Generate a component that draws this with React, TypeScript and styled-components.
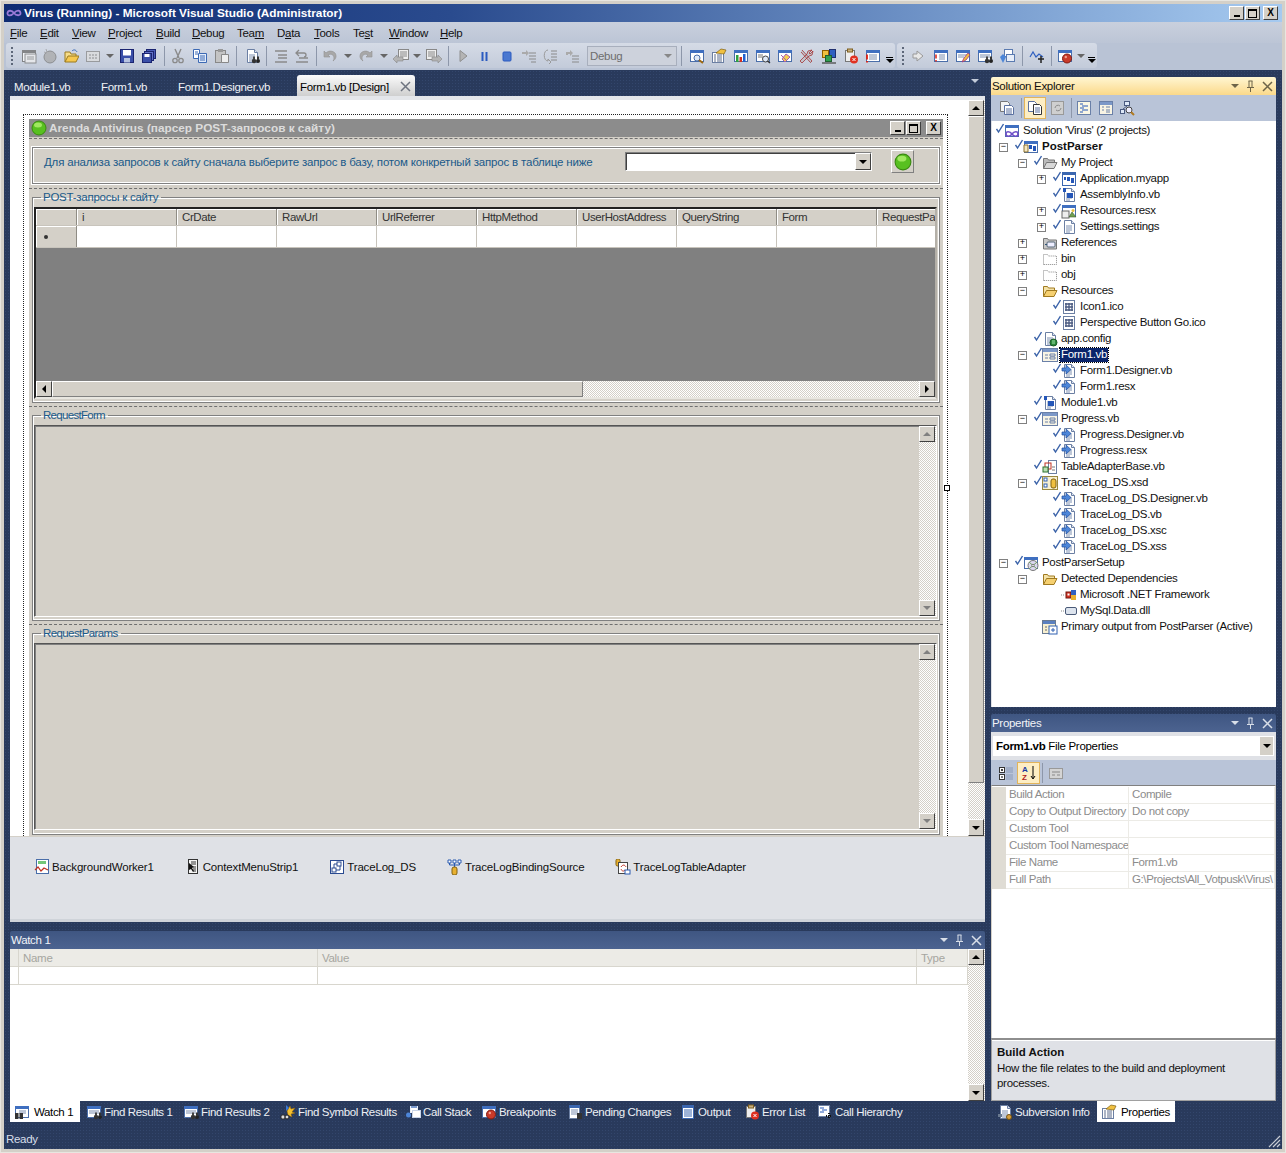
import React, { ReactNode } from 'react';
import styled, { createGlobalStyle } from 'styled-components';

const NAVY = '#293a5c';
const UI = '"Liberation Sans", Arial, sans-serif';
const CHECKER = 'repeating-conic-gradient(#d4d0c8 0 25%, #fff 0 50%) 0 0/2px 2px';

const Global = createGlobalStyle`
  html, body { margin: 0; padding: 0; background: #d4d0c8; }
  body { font: 11.5px ${UI}; letter-spacing: -0.3px; color: #000; }
  * { box-sizing: border-box; }
`;

const PAGE = (
  <>
    <path d="M3.5 1.5h7l3 3v10h-10z" fill="#fff" stroke="#6b7fa3" />
    <path d="M10.5 1.5v3h3" fill="#dfe6f2" stroke="#6b7fa3" />
    <path d="M5 7h6M5 9h6M5 11h6M5 13h4" stroke="#7d8fb0" />
  </>
);
const WIN = (
  <>
    <rect x="1.5" y="2.5" width="13" height="11" fill="#fff" stroke="#4a6ea9" />
    <rect x="1" y="2" width="14" height="3" fill="#3f6fc0" />
  </>
);
const FOLDER = (c1: string, c2: string, s: string) => (
  <>
    <path d="M1.5 13.5v-10h4l1 1.500h6v2" fill={c2} stroke={s} />
    <path d="M1.500 13.500l3-6h10.500l-3 6z" fill={c1} stroke={s} />
  </>
);
const BINO = (
  <>
    <circle cx="10" cy="13" r="2.200" fill="#333" />
    <circle cx="14" cy="13" r="2" fill="#222" />
    <rect x="9" y="8.500" width="2" height="3" fill="#444" />
    <rect x="13" y="8.500" width="2" height="3" fill="#333" />
  </>
);
const VBMARK = (
  <>
    <rect x="6" y="6" width="3" height="4" fill="#2456b8" />
    <rect x="10" y="7" width="3" height="5" fill="#2456b8" />
  </>
);

const ICONS: Record<string, ReactNode> = {
  vslogo: <path d="M8 8c-2-3-6-3-6.500 0S5 11.500 8 8s6-3 6.500 0S10 11 8 8z" fill="none" stroke="#9a7ad8" strokeWidth="1.800" />,
  newproj: <>{WIN}<rect x="4" y="6" width="11" height="9" fill="#eee" stroke="#777" /><path d="M6 9h7M6 11h7" stroke="#888" /></>,
  additem: <><circle cx="8" cy="9" r="6" fill="#a8a8a8" stroke="#777" /><path d="M4 1l1 3M2 4l3 1" stroke="#999" /></>,
  openfolder: <><path d="M2 14V4h5l1 2h5v2" fill="#f6dc88" stroke="#9a7a20" /><path d="M2 14l3-6h11l-3 6z" fill="#f6c84e" stroke="#9a7a20" /><path d="M9 3c2-2 4-1 5 1" stroke="#3a6ab8" fill="none" /></>,
  gridgrey: <><rect x="1.500" y="3.500" width="13" height="10" fill="#ddd" stroke="#888" /><path d="M4 7h2M7 7h2M10 7h2M4 10h2M7 10h2M10 10h2" stroke="#777" /></>,
  save: <><rect x="1.500" y="1.500" width="13" height="13" fill="#3a4fa8" stroke="#1a2470" /><rect x="4" y="2" width="8" height="5.500" fill="#fff" /><rect x="5" y="10" width="6" height="4.500" fill="#b8c4e0" /></>,
  saveall: <><rect x="5.500" y="1.500" width="9" height="9" fill="#4a5cb8" stroke="#1a2470" /><rect x="3.500" y="3.500" width="9" height="9" fill="#6070c8" stroke="#1a2470" /><rect x="1.500" y="5.500" width="9" height="9" fill="#3a4fa8" stroke="#1a2470" /><rect x="3.500" y="6" width="5" height="3" fill="#fff" /></>,
  cut: <><path d="M5 1l4 9M11 1L7 10" stroke="#8a8a8a" strokeWidth="1.400" /><circle cx="5" cy="12.500" r="2.200" fill="none" stroke="#8a8a8a" strokeWidth="1.300" /><circle cx="11" cy="12.500" r="2.200" fill="none" stroke="#8a8a8a" strokeWidth="1.300" /></>,
  copy: <><path d="M1.500 1.500h6v9h-6z" fill="#fff" stroke="#3c69b4" /><path d="M6.500 5.500h8v9h-8z" fill="#e2ecfa" stroke="#3c69b4" /><path d="M3 4h3M3 6h3M8 8h5M8 10h5M8 12h5" stroke="#3c69b4" /></>,
  paste: <><rect x="1.500" y="2.500" width="10" height="12" fill="#c4c4c4" stroke="#888" /><rect x="4" y="1" width="5" height="3" fill="#999" /><path d="M7.500 6.500h7v8h-7z" fill="#eee" stroke="#888" /></>,
  findfile: <>{PAGE}{BINO}</>,
  comment: <path d="M2 3h12M5 7h9M5 10h9M2 14h12" stroke="#8a8a8a" strokeWidth="1.300" />,
  uncomment: <><path d="M2 14h12M5 10h9" stroke="#8a8a8a" strokeWidth="1.300" /><path d="M5 2L2 5l3 3M2 5h8a2 2 0 010 4" fill="none" stroke="#8a8a8a" strokeWidth="1.300" /></>,
  undo: <path d="M2 3v6h6L6 7c3-2 6 0 6 3 0 2-1 3-1 3 3-2 4-5 2-8-2-2-6-3-9 0z" fill="#a8a8a8" stroke="#909090" strokeWidth=".6" />,
  redo: <path d="M14 3v6H8l2-2c-3-2-6 0-6 3 0 2 1 3 1 3-3-2-4-5-2-8 2-2 6-3 9 0z" fill="#a8a8a8" stroke="#909090" strokeWidth=".6" />,
  navback: <><rect x="5.500" y="1.500" width="10" height="10" fill="#eee" stroke="#888" /><path d="M7 4h7M7 6h7M7 8h7" stroke="#888" /><path d="M0 11l4-4v2h6v4H4v2z" fill="#b4b4b4" stroke="#888" strokeWidth=".6" /></>,
  navfwd: <><rect x=".5" y="1.500" width="10" height="10" fill="#eee" stroke="#888" /><path d="M2 4h7M2 6h7M2 8h7" stroke="#888" /><path d="M16 11l-4-4v2H6v4h6v2z" fill="#b4b4b4" stroke="#888" strokeWidth=".6" /></>,
  play: <path d="M5 2.500L12 8l-7 5.500z" fill="#b4b4b4" stroke="#8f8f8f" />,
  pause: <path d="M5.500 4v9M9.500 4v9" stroke="#2b5bc0" strokeWidth="2" />,
  stop: <rect x="4" y="4" width="8" height="9" rx="1" fill="#4a78d0" stroke="#2b5bc0" />,
  stepin: <><path d="M8 5h7M8 8h7M8 11h7M10 14h5" stroke="#8a8a8a" /><path d="M1 4h4V2l3 3-3 3V6H1z" fill="#aaa" /></>,
  stepover: <><path d="M9 3h6M9 6h6M9 9h6M9 12h6" stroke="#8a8a8a" /><path d="M6 2C1 2 1 13 6 13V11l3 3-3 3" fill="none" stroke="#999" /></>,
  stepout: <><path d="M8 8h7M8 11h7M8 14h7" stroke="#8a8a8a" /><path d="M2 7V4h4V2l3 3-3 3V6H4v1z" fill="#aaa" /></>,
  solexp: <>{WIN}<circle cx="8" cy="10" r="3" fill="#dfe9f8" stroke="#4a6ea9" /><path d="M10 12l4 3" stroke="#a06a10" strokeWidth="2" /></>,
  props: <><rect x="1.500" y="4.500" width="11" height="10" fill="#fff" stroke="#6b7fa3" /><path d="M3 7h2M6 7h5M3 9h2M6 9h5M3 11h2M6 11h5M3 13h2M6 13h5" stroke="#5a6a8a" /><path d="M5 5l5-4 5 1-2 4z" fill="#f0c040" stroke="#806010" strokeWidth=".7" /></>,
  objbrowser: <>{WIN}<rect x="3" y="7" width="2.500" height="7" fill="#30a040" /><rect x="6.500" y="9" width="2.500" height="5" fill="#d03020" /><rect x="10" y="6" width="2.500" height="8" fill="#2060d0" /></>,
  toolwin: <>{WIN}<path d="M3 7h5M3 9h5" stroke="#777" /><circle cx="10.500" cy="11" r="3" fill="#dfe9f8" stroke="#444" /><path d="M12.500 13l2.500 2" stroke="#333" strokeWidth="1.500" /></>,
  teamexp: <>{WIN}<path d="M4 7l6 6M9 6l4 3-5 5-3-3z" fill="#f4d050" stroke="#a85ab0" /></>,
  tools: <path d="M3 2l10 11-1.500 1.500L2 4M13 2l-3 3 1 1 3-3-1 4-3 1-7 7-2-2 7-7 1-3z" fill="#c0c4cc" stroke="#a02020" strokeWidth=".7" />,
  classview: <><rect x="1.500" y="2.500" width="6" height="7" fill="#f0c040" stroke="#906000" /><rect x="8.500" y="1.500" width="6" height="8" fill="#3060c0" stroke="#203070" /><rect x="4.500" y="7.500" width="6" height="6" fill="#30a050" stroke="#206030" /><path d="M1 15h14" stroke="#555" strokeWidth="1.400" /></>,
  errlist: <><rect x="2.500" y="2.500" width="9" height="11" fill="#eee" stroke="#777" /><rect x="4.500" y="1" width="5" height="3" fill="#c8b080" stroke="#806020" /><circle cx="11" cy="11.500" r="4" fill="#e03020" /><path d="M9.500 10l3 3M12.500 10l-3 3" stroke="#fff" /></>,
  winerr: <>{WIN}<path d="M4 7h8M4 9h8M4 11h8" stroke="#7d8fb0" /><path d="M2 6.500v5M2 13v1.500" stroke="#e02010" strokeWidth="1.800" /></>,
  arrowgrey: <path d="M6 3l6 5-6 5v-3H2V6h4z" fill="#e8e8e8" stroke="#999" />,
  winlist: <>{WIN}<path d="M6 7h6M6 9h6M6 11h6" stroke="#7d8fb0" /><path d="M3 6.500v4M3 12v1.500" stroke="#e02010" strokeWidth="1.500" /></>,
  edit: <>{WIN}<path d="M3 7h10M3 9h6" stroke="#7d8fb0" /><path d="M7 14l2-4 4-5 2 2-4 5z" fill="#f0c040" stroke="#a03080" strokeWidth=".8" /></>,
  winfind: <>{WIN}<path d="M3 7h10M3 9h10" stroke="#7d8fb0" />{BINO}</>,
  stack: <><rect x="5.500" y="1.500" width="8" height="7" fill="#fff" stroke="#5a7ab0" /><rect x="7.500" y="6.500" width="8" height="7" fill="#e8eef8" stroke="#5a7ab0" /><path d="M1 9l3-3 3 3-3 6z" fill="#4d86d8" /></>,
  wave: <><path d="M1 9l3-5 3 5 3-3 4 3" fill="none" stroke="#3060c0" strokeWidth="1.200" /><path d="M9 11h6M12 8v7" stroke="#222" strokeWidth="1.500" /></>,
  breakpt: <>{WIN}<circle cx="10" cy="10.500" r="4.500" fill="#c83a2a" stroke="#801a10" /><circle cx="8.800" cy="9" r="1.200" fill="#f0a090" /></>,
  solution: <>{WIN}<path d="M8 11c-2-3-6-3-6 0s4 3 6 0 6-3 6 0-4 3-6 0z" fill="none" stroke="#7050c8" strokeWidth="1.600" /></>,
  vbproj: <>{WIN}{VBMARK}<path d="M1 6h4v7H1z" fill="#f6e8c0" stroke="#8a7030" /></>,
  foldergrey: FOLDER('#d8d8d8', '#bbb', '#777'),
  folder: FOLDER('#f6d070', '#f4e2a8', '#a07a20'),
  myapp: <><rect x="1.500" y="1.500" width="13" height="13" fill="#fff" stroke="#3a66b0" /><rect x="1" y="1" width="14" height="3" fill="#3a66b0" />{VBMARK}<rect x="3" y="6" width="2" height="3" fill="#2456b8" /></>,
  vb: <>{PAGE}<rect x="2" y="1" width="3" height="4" fill="#2456b8" /><rect x="6" y="6" width="6" height="5" fill="#2456b8" /></>,
  resx: <>{WIN}<rect x="1" y="8" width="7" height="7" fill="#eee" stroke="#666" /><path d="M8 14l3-5 4 5z" fill="#70a050" stroke="#406030" strokeWidth=".6" /><circle cx="12" cy="7.500" r="1.500" fill="#e8c040" /></>,
  settings: PAGE,
  refs: <><path d="M1.500 3.500h4l1 1.500h8v9h-13z" fill="#c8c8c8" stroke="#777" /><rect x="5" y="7" width="8" height="5" rx="1" fill="#eef" stroke="#567" /><path d="M3 9.500h2" stroke="#357" /></>,
  dotted: <path d="M1.500 13.500v-10h4l1 1.500h8v8.500z" fill="none" stroke="#888" strokeDasharray="1 1" />,
  ico: <><rect x="2.500" y="1.500" width="11" height="13" fill="#fff" stroke="#6b7fa3" /><path d="M5 4v8M8 4v8M11 4v8M4 5h8M4 8h8M4 11h8" stroke="#4a5a80" strokeWidth="1.300" /></>,
  config: <>{PAGE}<circle cx="11.500" cy="11.500" r="3.500" fill="#2c8a3c" stroke="#1a5a28" /><path d="M10 10h3M10 12h3" stroke="#9fe0a8" /></>,
  form: <><rect x=".5" y="1.500" width="15" height="13" fill="#f8f4e4" stroke="#6a80a8" /><rect x="1" y="2" width="14" height="3" fill="#7c98c8" /><path d="M3 8h3M3 11h3M8 7h5v2H8zM8 10h5v2H8z" fill="none" stroke="#6a80a8" /></>,
  des: <>{PAGE}<path d="M1 5h4V2l5 4.500L5 11V8H1z" fill="#4d86d8" stroke="#1c4fa0" strokeWidth=".7" /></>,
  adapter: <><rect x="6.500" y="1.500" width="8" height="13" fill="#fff" stroke="#6b7fa3" /><rect x="3" y="4" width="6" height="6" fill="none" stroke="#c03020" /><rect x="1" y="8" width="5" height="5" fill="#b8e0b0" stroke="#307030" /><path d="M10 8h3M10 11h3" stroke="#777" /></>,
  xsd: <><rect x=".5" y="1.500" width="15" height="13" fill="#f8f0d0" stroke="#9a8840" /><rect x="2" y="3" width="3" height="3" fill="#fff" stroke="#3060b0" /><rect x="2" y="9" width="3" height="3" fill="#fff" stroke="#3060b0" /><rect x="9" y="4" width="5" height="9" rx="2" fill="#f0c040" stroke="#806010" /></>,
  setup: <>{WIN}<circle cx="10" cy="10.500" r="5" fill="#dcd8f0" stroke="#777" /><path d="M6 7l8 7M14 7l-8 7" stroke="#70a060" /><circle cx="10" cy="10.500" r="1.200" fill="#fff" stroke="#777" /></>,
  dotnet: <><path d="M0 8h4" stroke="#888" strokeDasharray="1 1" /><rect x="5" y="5" width="5" height="6" fill="#d03020" stroke="#701810" /><rect x="10" y="3" width="5" height="5" fill="#3060c0" /><rect x="10" y="8" width="5" height="5" fill="#e8b030" /><rect x="6.500" y="6.500" width="2" height="2" fill="#fff" /></>,
  dll: <><path d="M0 8h4" stroke="#888" strokeDasharray="1 1" /><rect x="4.500" y="4.500" width="11" height="7" rx="1.500" fill="#dde4ee" stroke="#4a5a78" /></>,
  output: <><rect x=".5" y="1.500" width="13" height="13" fill="#f8f0d0" stroke="#6a7a90" /><rect x="1" y="2" width="12" height="3" fill="#5a80c0" /><rect x="7" y="7" width="8" height="8" fill="#fff" stroke="#3060b0" /><path d="M11 9v4M9 11h4" stroke="#3060b0" /><path d="M3 8h2M3 11h2" stroke="#666" /></>,
  showall: <><path d="M1.500 1.500h7l2 2v8h-9z" fill="#f4f4f4" stroke="#777" /><path d="M5.500 5.500h7l2 2v7h-9z" fill="#fff" stroke="#5a70a0" /><path d="M7 9h6M7 11h6M7 13h6" stroke="#5a70a0" /></>,
  showfiles: <><path d="M1.500 1.500h6l2 2v8h-8z" fill="#fff" stroke="#5a70a0" /><path d="M6.500 4.500h6l2 2v8h-8z" fill="#fff" stroke="#333" /><path d="M8 8h5M8 10h5M8 12h5" stroke="#5a70a0" /></>,
  refresh: <><rect x="1.500" y="1.500" width="12" height="13" fill="#cfcfcf" stroke="#999" /><path d="M5 8a3 3 0 015-2M11 8a3 3 0 01-5 2" fill="none" stroke="#8a8a8a" /></>,
  code: <><rect x="1.500" y="1.500" width="13" height="13" fill="#fbf7e4" stroke="#6a80a8" /><path d="M4 4h3M6 6h6M4 8h4M6 10h6M4 12h3" stroke="#2456b8" /></>,
  designer: <><rect x="1.500" y="1.500" width="13" height="13" fill="#f8f4e4" stroke="#6a80a8" /><rect x="2" y="2" width="12" height="3" fill="#7c98c8" /><path d="M4 7h2M4 10h2M8 7h4M8 10h4M8 12h4" stroke="#6a80a8" /></>,
  classdiag: <><rect x="5.500" y="1.500" width="5" height="4" fill="#dfe9f8" stroke="#4a5a80" /><rect x="1.500" y="9.500" width="4" height="4" fill="#dfe9f8" stroke="#4a5a80" /><path d="M8 6l-4 3" stroke="#4a5a80" /><circle cx="10" cy="10" r="3" fill="#eef" stroke="#444" /><path d="M12 12l3 3" stroke="#b07a20" strokeWidth="2" /></>,
  catgrid: <><rect x="1.500" y="2.500" width="5" height="5" fill="#fff" stroke="#333" /><rect x="1.500" y="9.500" width="5" height="5" fill="#fff" stroke="#333" /><path d="M3 5h2M4 4v2M3 12h2" stroke="#000" /><path d="M8 3h7M8 5h7M8 7h7M8 10h7M8 12h7M8 14h7" stroke="#8a9ab8" /></>,
  pages: <><rect x="1.500" y="3.500" width="13" height="10" fill="#d4d4d4" stroke="#999" /><path d="M4 7h8M4 10h3M9 10h3" stroke="#888" /></>,
  az: <><text x="1" y="7" fontSize="8" fontWeight="700" fill="#1a3aa0" fontFamily={UI}>A</text><text x="1" y="15" fontSize="8" fontWeight="700" fill="#b02020" fontFamily={UI}>Z</text><path d="M12 1v12M10 11l2 3 2-3" stroke="#000" fill="none" /></>,
  watch: <>{WIN}<path d="M5 7h7M5 9h7" stroke="#7d8fb0" /><rect x="1" y="9" width="3.500" height="6" fill="#333" /><rect x="5.500" y="9" width="3.500" height="6" fill="#333" /></>,
  symbol: <><path d="M7 7l3-5 1 3 4-1-3 4 3 1-4 1 1 3-4-2z" fill="#f4c030" stroke="#906000" strokeWidth=".5" /><path d="M6 1l3 3-3 3z" fill="#3a7ad8" /><circle cx="3" cy="13" r="2.200" fill="#ddd" stroke="#222" /><circle cx="7" cy="13" r="2" fill="#ddd" stroke="#222" /></>,
  callstack: <><circle cx="3.500" cy="11" r="2.500" fill="#4d86d8" /><rect x="5.500" y="2.500" width="7" height="6" fill="#fff" stroke="#e8eef8" /><rect x="7.500" y="6.500" width="8" height="7" fill="#fff" stroke="#c8d4e8" /><path d="M6 3h6" stroke="#7a9ad0" strokeWidth="2" /></>,
  pending: <><rect x="2.500" y="1.500" width="10" height="13" fill="#fff" stroke="#6b7fa3" /><rect x="2" y="1" width="11" height="3" fill="#3a66b0" /><path d="M4 6h7M4 8h7M4 10h7" stroke="#7d8fb0" /><rect x="10" y="9" width="5" height="6" fill="#333" /></>,
  outputwin: <><rect x="2.500" y="1.500" width="11" height="13" fill="#fff" stroke="#3a66b0" /><rect x="2" y="1" width="12" height="3" fill="#3a66b0" /><path d="M4 6h8M4 8h8M4 10h8M4 12h8" stroke="#3a66b0" /></>,
  hierarchy: <><rect x="1.500" y="1.500" width="11" height="11" fill="#fff" stroke="#6b7fa3" /><path d="M3 4h4M5 6h5M3 8h4" stroke="#2456b8" /><path d="M12 9v6M9 12h6" stroke="#111" strokeWidth="2" strokeDasharray="1 1" /></>,
  svn: <>{PAGE}<circle cx="12" cy="13" r="2.500" fill="#d8a040" stroke="#705010" /><path d="M1 10h4v3H1z" fill="#6a7a90" /></>,
  worker: <><rect x="2.500" y=".5" width="12" height="14" fill="#fff" stroke="#4a6ea9" /><path d="M5 2v3M7 2v3M9 2v3M11 2v3" stroke="#38b040" strokeWidth="1.400" /><path d="M1 11l3-3 3 4 3-3 4 2" fill="none" stroke="#c03020" strokeWidth="1.200" /></>,
  ctxmenu: <><rect x="3.500" y=".5" width="9" height="14" fill="#f4f4f4" stroke="#333" /><path d="M6 3h5M6 5h5M8 8h3M8 10h3M8 12h3" stroke="#333" /><path d="M4 4l5 4-2 1 2 3-1 1-2-3-2 1z" fill="#111" /></>,
  dataset: <><rect x="1.500" y="1.500" width="13" height="13" fill="#fff" stroke="#2a4a90" /><rect x="8" y="3" width="4" height="4" fill="#fff" stroke="#2a4a90" /><rect x="3" y="9" width="4" height="4" fill="#fff" stroke="#2a4a90" /><path d="M8 5H5v4M7 11h4V7" stroke="#2a4a90" fill="none" /></>,
  binding: <><path d="M1 1h3v3H1zM6 1h3v3H6zM11 1h3v3h-3z" fill="#fff" stroke="#2a5ab0" /><path d="M2.500 4v2h10V4M7.500 4v4" stroke="#2a5ab0" fill="none" /><rect x="5" y="8" width="5" height="8" rx="2" fill="#e8b030" stroke="#806010" /></>,
  tableadapter: <><rect x="1" y="0" width="4" height="7" rx="1.500" fill="#e8b030" stroke="#806010" /><rect x="3.500" y="3.500" width="9" height="11" fill="#fff" stroke="#444" /><path d="M6 8c2-3 4-2 5 0M10 11c-2 2-3 1-4-1" fill="none" stroke="#c03020" /><rect x="10" y="11" width="5" height="4" fill="#fff" stroke="#2a5ab0" /></>,
  greenball: <><circle cx="8" cy="8" r="7" fill="#58c020" stroke="#3a8a10" /><ellipse cx="7" cy="5" rx="4" ry="2.500" fill="#a0e860" /></>,
};

const Glyph = styled.svg<{ $s: number; $off?: boolean }>`
  width: ${p => p.$s}px;
  height: ${p => p.$s}px;
  flex: none;
  display: block;
  ${p => (p.$off ? 'filter: grayscale(1) opacity(.75);' : '')}
`;
const Icon = ({ n, s = 16, off }: { n: string; s?: number; off?: boolean }) => (
  <Glyph viewBox="0 0 16 16" $s={s} $off={off}>{ICONS[n]}</Glyph>
);

const Tri = styled.span<{ $c?: string; $dir?: string }>`
  width: 0;
  height: 0;
  flex: none;
  border-style: solid;
  ${p =>
    p.$dir === 'up'
      ? `border-width: 0 4px 4px; border-color: transparent transparent ${p.$c || '#000'};`
      : p.$dir === 'left'
      ? `border-width: 4px 4px 4px 0; border-color: transparent ${p.$c || '#000'} transparent transparent;`
      : p.$dir === 'right'
      ? `border-width: 4px 0 4px 4px; border-color: transparent transparent transparent ${p.$c || '#000'};`
      : `border-width: 4px 4px 0; border-color: ${p.$c || '#000'} transparent transparent;`}
`;

const Frame = styled.div`
  width: 1286px;
  height: 1153px;
  border: 4px solid #d4d0c8;
  outline: 1px solid #e8e6e0;
  outline-offset: -1px;
  display: flex;
  flex-direction: column;
  overflow: hidden;
  background: radial-gradient(#33466c 0.7px, transparent 0.8px) 0 0/3px 3px, ${NAVY};
`;
const TitleBar = styled.div`
  height: 18px;
  flex: none;
  display: flex;
  align-items: center;
  padding: 0 4px 0 2px;
  background: linear-gradient(90deg, #0f2c72 0%, #2a4b8e 35%, #6b8fc4 70%, #a6caf0 100%);
`;
const TitleText = styled.span`
  flex: 1;
  margin-left: 2px;
  font: bold 11.8px ${UI};
  letter-spacing: 0;
  color: #fff;
`;
const CapBtn = styled.span`
  width: 15px;
  height: 14px;
  flex: none;
  margin-left: 1px;
  display: flex;
  align-items: center;
  justify-content: center;
  background: #d4d0c8;
  border: 1px solid;
  border-color: #fff #404040 #404040 #fff;
`;
const CapGap = styled.span<{ $w: number }>`
  width: ${p => p.$w}px;
  flex: none;
`;
const CapMark = styled.span<{ $k: string }>`
  display: block;
  ${p =>
    p.$k === 'min'
      ? 'width: 6px; height: 2px; background: #000; margin-top: 6px;'
      : 'width: 9px; height: 9px; border: 1px solid #000; border-top-width: 2px;'}
`;
const CapX = styled.span`
  font: bold 10px ${UI};
  line-height: 10px;
  color: #000;
`;
const Caps = ({ gap }: { gap: number }) => (
  <>
    <CapBtn><CapMark $k="min" /></CapBtn>
    <CapBtn><CapMark $k="max" /></CapBtn>
    <CapGap $w={gap} />
    <CapBtn><CapX>X</CapX></CapBtn>
  </>
);

const MenuBar = styled.div`
  height: 21px;
  flex: none;
  display: flex;
  align-items: center;
  padding-left: 6px;
  background: linear-gradient(#c9d0dd, #bcc5d6);
`;
const MenuItem = styled.span<{ $w: number }>`
  width: ${p => p.$w}px;
  flex: none;
  color: #111;
`;

const ToolRow = styled.div`
  height: 27px;
  flex: none;
  display: flex;
  padding: 0 0 2px 2px;
  background: #b9c3d5;
`;
const Pill = styled.div`
  display: flex;
  align-items: center;
  height: 25px;
  border-radius: 3px;
  background: linear-gradient(#d5dbe6, #c3cbda);
  margin-right: 2px;
`;
const Tool = styled.span<{ $w: number }>`
  width: ${p => p.$w}px;
  flex: none;
  height: 22px;
  display: flex;
  align-items: center;
  justify-content: center;
`;
const Sep = styled.span<{ $w: number }>`
  width: ${p => p.$w}px;
  flex: none;
  height: 20px;
  display: flex;
  justify-content: center;
  &::before {
    content: '';
    width: 1px;
    background: #8d97aa;
  }
`;
const Grip = styled.span<{ $w: number }>`
  width: ${p => p.$w}px;
  flex: none;
  height: 18px;
  display: flex;
  justify-content: center;
  &::before {
    content: '';
    width: 2px;
    background: repeating-linear-gradient(#5d6779 0 2px, transparent 2px 4px);
  }
`;
const Overflow = styled.span<{ $w: number }>`
  width: ${p => p.$w}px;
  flex: none;
  align-self: stretch;
  display: flex;
  flex-direction: column;
  align-items: center;
  justify-content: flex-end;
  gap: 1px;
  padding-bottom: 5px;
  &::before {
    content: '';
    width: 7px;
    height: 1px;
    background: #000;
  }
`;
const Combo = styled.span`
  width: 90px;
  height: 20px;
  flex: none;
  display: flex;
  align-items: center;
  justify-content: space-between;
  padding: 0 4px 0 2px;
  margin-left: 4px;
  background: #cdd2dc;
  border: 1px solid #a8afbd;
  color: #6e6e6e;
`;

type TI = ['i', string, number, boolean?] | ['a', number] | ['s', number] | ['g', number] | ['o', number] | ['c'];
const bar1: TI[] = [
  ['g', 12], ['i', 'newproj', 22, true], ['i', 'additem', 20, true], ['i', 'openfolder', 22], ['i', 'gridgrey', 22, true], ['a', 12],
  ['i', 'save', 22], ['i', 'saveall', 22], ['s', 8], ['i', 'cut', 20], ['i', 'copy', 23], ['i', 'paste', 22], ['s', 7],
  ['i', 'findfile', 23], ['s', 7], ['i', 'comment', 21], ['i', 'uncomment', 22], ['s', 7], ['i', 'undo', 20], ['a', 15],
  ['i', 'redo', 22], ['a', 14], ['i', 'navback', 20], ['a', 12], ['i', 'navfwd', 22], ['s', 7], ['i', 'play', 22], ['i', 'pause', 22],
  ['i', 'stop', 22], ['i', 'stepin', 21], ['i', 'stepover', 22], ['i', 'stepout', 22], ['c'], ['s', 9],
  ['i', 'solexp', 22], ['i', 'props', 22], ['i', 'objbrowser', 22], ['i', 'toolwin', 22], ['i', 'teamexp', 22], ['i', 'tools', 22],
  ['i', 'classview', 22], ['i', 'errlist', 22], ['i', 'winerr', 22], ['o', 11],
];
const bar2: TI[] = [
  ['g', 11], ['i', 'arrowgrey', 22], ['i', 'winlist', 22], ['i', 'edit', 22], ['i', 'winfind', 22], ['i', 'stack', 22], ['s', 8],
  ['i', 'wave', 22], ['s', 6], ['i', 'breakpt', 22], ['a', 10], ['o', 11],
];
const Bar = ({ items }: { items: TI[] }) => (
  <Pill>
    {items.map((t, i) => {
      if (t[0] === 'i') return <Tool key={i} $w={t[2]}><Icon n={t[1]} off={t[3]} /></Tool>;
      if (t[0] === 'a') return <Tool key={i} $w={t[1]}><Tri $c="#666" /></Tool>;
      if (t[0] === 's') return <Sep key={i} $w={t[1]} />;
      if (t[0] === 'g') return <Grip key={i} $w={t[1]} />;
      if (t[0] === 'o') return <Overflow key={i} $w={t[1]}><Tri /></Overflow>;
      return <Combo key={i}>Debug<Tri $c="#888" /></Combo>;
    })}
  </Pill>
);

const Main = styled.div`
  flex: 1;
  min-height: 0;
  display: flex;
  gap: 6px;
  padding: 5px 6px 8px;
`;
const LeftCol = styled.div`
  width: 975px;
  flex: none;
  display: flex;
  flex-direction: column;
`;
const RightCol = styled.div`
  width: 285px;
  flex: none;
  display: flex;
  flex-direction: column;
  padding-top: 2px;
`;
const DocTabs = styled.div`
  height: 21px;
  flex: none;
  display: flex;
  align-items: stretch;
`;
const DocTab = styled.span<{ $w: number; $on?: boolean }>`
  width: ${p => p.$w}px;
  flex: none;
  display: flex;
  align-items: center;
  gap: 11px;
  white-space: nowrap;
  padding: ${p => (p.$on ? '2px 0 0 3px' : '2px 0 0 4px')};
  color: ${p => (p.$on ? '#000' : '#f0f2f6')};
  border-radius: 3px 3px 0 0;
  ${p => (p.$on ? 'background: linear-gradient(#fbfbfb, #cfcfcf);' : '')}
`;
const XMark = styled.svg`
  width: 11px;
  height: 11px;
  flex: none;
  display: block;
`;
const CloseX = ({ c }: { c: string }) => (
  <XMark viewBox="0 0 11 11"><path d="M1 1l9 9M10 1l-9 9" stroke={c} strokeWidth="1.500" fill="none" /></XMark>
);
const DocArrow = styled.span`
  margin-left: auto;
  align-self: center;
  margin-right: 6px;
  margin-top: 6px;
`;
const Doc = styled.div`
  height: 826px;
  flex: none;
  display: flex;
  flex-direction: column;
  border-top: 4px solid #e4e6ea;
`;
const DesignerRow = styled.div`
  height: 736px;
  flex: none;
  display: flex;
  background: #fff;
`;
const Canvas = styled.div`
  flex: 1;
  min-width: 0;
  overflow: hidden;
  padding: 14px 0 0 13px;
  background: #fff;
`;
const Selection = styled.div`
  width: 925px;
  height: 760px;
  position: relative;
  border: 1px dotted #222;
  padding: 4px 4px 0 5px;
`;
const Handle = styled.span`
  position: absolute;
  right: -3px;
  top: 370px;
  width: 6px;
  height: 6px;
  background: #fff;
  border: 1px solid #000;
`;
const FormWin = styled.div`
  background: #d4d0c8;
  height: 760px;
  display: flex;
  flex-direction: column;
  color: #444;
`;
const FormTitle = styled.div`
  height: 18px;
  flex: none;
  display: flex;
  align-items: center;
  padding: 0 2px 0 2px;
  background: #8c8c8c;
`;
const FormTitleText = styled.span`
  flex: 1;
  margin-left: 2px;
  font: bold 11.800px ${UI};
  letter-spacing: 0;
  color: #dcdcdc;
`;
const FormBody = styled.div`
  padding: 1px 3px 0;
  display: flex;
  flex-direction: column;
`;
const DashCell = styled.div<{ $h: number; $top: number }>`
  height: ${p => p.$h}px;
  flex: none;
  margin: 0 -3px;
  padding: ${p => p.$top}px 3px 0;
  border-top: 1px dashed #6f6f6f;
`;
const NotePanel = styled.div`
  height: 37px;
  display: flex;
  align-items: center;
  padding: 0 25px 8px 11px;
  border: 1px solid #808080;
  box-shadow: 0 0 0 1px #fff, inset 0 0 0 1px #fff;
`;
const Note = styled.span`
  flex: 1;
  color: #1a5a8a;
  letter-spacing: -0.180px;
`;
const FormCombo = styled.span`
  width: 247px;
  height: 19px;
  flex: none;
  display: flex;
  justify-content: flex-end;
  background: #fff;
  border: 1px solid;
  border-color: #808080 #fff #fff #808080;
  box-shadow: inset 1px 1px 0 #404040;
`;
const ComboBtn = styled.span`
  width: 16px;
  display: flex;
  align-items: center;
  justify-content: center;
  background: #d4d0c8;
  border: 1px solid;
  border-color: #fff #404040 #404040 #fff;
`;
const GoBtn = styled.span`
  width: 23px;
  height: 23px;
  flex: none;
  margin-left: 19px;
  display: flex;
  align-items: center;
  justify-content: center;
  border: 1px solid;
  border-color: #fff #808080 #808080 #fff;
`;
const Group = styled.fieldset<{ $h: number; $pt: number }>`
  height: ${p => p.$h}px;
  margin: 0;
  padding: ${p => p.$pt}px 2px 0 1px;
  border: 1px solid #808080;
  box-shadow: inset 1px 1px 0 #fff, inset -1px -1px 0 #fff;
  min-width: 0;
`;
const Legend = styled.legend<{ $ls: number }>`
  margin-left: 7px;
  padding: 0 3px 0 2px;
  height: 14px;
  line-height: 15px;
  color: #1a5a8a;
  letter-spacing: ${p => p.$ls}px;
`;
const DataGrid = styled.div`
  height: 192px;
  display: flex;
  flex-direction: column;
  border: 2px solid #222;
  border-right-color: #b4b0a8;
  border-bottom-color: #e8e6e0;
  background: #808080;
`;
const GridRow = styled.div<{ $h: number; $bg: string }>`
  height: ${p => p.$h}px;
  flex: none;
  display: flex;
  overflow: hidden;
  background: ${p => p.$bg};
  border-bottom: 1px solid #c8c4bc;
`;
const GridCell = styled.span<{ $w: number; $head?: boolean }>`
  width: ${p => p.$w}px;
  flex: none;
  display: flex;
  align-items: center;
  padding-left: 5px;
  white-space: nowrap;
  color: #333;
  letter-spacing: -0.400px;
  border-right: 1px solid ${p => (p.$head ? '#8f8c84' : '#c8c4bc')};
  background: ${p => (p.$head ? '#d4d0c8' : 'transparent')};
  box-shadow: ${p => (p.$head ? 'inset 1px 1px 0 #fff' : 'none')};
`;
const RowMark = styled.span`
  width: 4px;
  height: 4px;
  border-radius: 50%;
  background: #333;
  margin-left: 3px;
`;
const GridSpace = styled.div`
  flex: 1;
`;
const HScroll = styled.div`
  height: 16px;
  flex: none;
  display: flex;
  background: ${CHECKER};
`;
const SBtn = styled.span<{ $w?: number; $h?: number }>`
  width: ${p => p.$w || 16}px;
  height: ${p => p.$h || 16}px;
  flex: none;
  display: flex;
  align-items: center;
  justify-content: center;
  background: #d4d0c8;
  border: 1px solid;
  border-color: #fff #404040 #404040 #fff;
`;
const HThumb = styled.span`
  width: 531px;
  flex: none;
  background: #d4d0c8;
  border: 1px solid;
  border-color: #fff #808080 #808080 #fff;
`;
const Spacer = styled.span`
  flex: 1;
`;
const Sunken = styled.div<{ $h: number }>`
  height: ${p => p.$h}px;
  display: flex;
  justify-content: flex-end;
  border: 1px solid #555;
  border-right-color: #fff;
  border-bottom-color: #fff;
  box-shadow: inset 1px 1px 0 #808080;
  margin-top: 1px;
  background: #d4d0c8;
`;
const VTrack = styled.div`
  width: 17px;
  flex: none;
  display: flex;
  flex-direction: column;
  padding-right: 1px;
  background: ${CHECKER};
`;
const VThumb = styled.span<{ $h: number }>`
  height: ${p => p.$h}px;
  flex: none;
  background: #d4d0c8;
  border: 1px solid;
  border-color: #fff #808080 #808080 #fff;
`;
const Tray = styled.div`
  flex: 1;
  display: flex;
  align-items: flex-start;
  gap: 31px;
  padding: 22px 0 0 24px;
  background: #dfe1e6;
  border-top: 1px solid #d4d0c8;
  border-bottom: 3px solid #cfd3d9;
`;
const TrayItem = styled.span`
  display: flex;
  align-items: center;
  gap: 2px;
  color: #111;
  letter-spacing: -0.170px;
`;
const DockTitle = styled.div`
  height: 18px;
  flex: none;
  display: flex;
  align-items: center;
  gap: 7px;
  padding: 0 3px 0 1px;
  background: linear-gradient(#3f5682, #4c6390);
  color: #f2f4f8;
  border-radius: 2px 2px 0 0;
`;
const SolTitle = styled(DockTitle)`
  background: linear-gradient(#fff6d2, #fbd98a);
  color: #111;
`;
const DockName = styled.span`
  flex: 1;
`;
const PinGlyph = styled.svg`
  width: 9px;
  height: 12px;
  flex: none;
  display: block;
`;
const DockCtl = ({ c }: { c: string }) => (
  <>
    <Tri $c={c} />
    <PinGlyph viewBox="0 0 9 12"><path d="M2.500 1h4M3 1v6M6 1v6M1 7.500h7M4.500 8v4" stroke={c} fill="none" /></PinGlyph>
    <CloseX c={c} />
  </>
);
const Watch = styled.div`
  height: 170px;
  margin-top: 9px;
  flex: none;
  display: flex;
  flex-direction: column;
`;
const WatchBody = styled.div`
  flex: 1;
  display: flex;
  background: #fff;
  min-height: 0;
`;
const WatchTable = styled.div`
  flex: 1;
`;
const WatchRow = styled.div<{ $h: number; $head?: boolean }>`
  height: ${p => p.$h}px;
  display: flex;
  background: ${p => (p.$head ? '#ecebe6' : '#fff')};
  border-bottom: 1px solid #d8d6ce;
`;
const WatchCell = styled.span<{ $w?: number }>`
  ${p => (p.$w ? `width: ${p.$w}px; flex: none;` : 'flex: 1;')}
  border-right: 1px solid #d8d6ce;
  padding: 1px 0 0 4px;
  color: #a6a6a0;
  line-height: 16px;
`;
const BottomTabs = styled.div`
  height: 21px;
  flex: none;
  display: flex;
`;
const BTab = styled.span<{ $w: number; $on?: boolean; $v?: number }>`
  width: ${p => p.$w}px;
  flex: none;
  display: flex;
  align-items: center;
  gap: ${p => (p.$on ? 4 : 2)}px;
  padding-left: 4px;
  margin-right: ${p => p.$v || 0}px;
  white-space: nowrap;
  letter-spacing: -0.350px;
  color: ${p => (p.$on ? '#000' : '#eef1f6')};
  background: ${p => (p.$on ? '#fff' : 'transparent')};
`;
const SolPanel = styled.div`
  height: 630px;
  flex: none;
  display: flex;
  flex-direction: column;
  margin-bottom: 7px;
`;
const PanelBar = styled.div<{ $h: number; $pl: number }>`
  height: ${p => p.$h}px;
  flex: none;
  display: flex;
  align-items: center;
  padding-left: ${p => p.$pl}px;
  background: #b9c4d8;
`;
const PBtn = styled.span<{ $w?: number; $on?: boolean }>`
  width: ${p => p.$w || 23}px;
  height: 22px;
  flex: none;
  display: flex;
  align-items: center;
  justify-content: center;
  ${p => (p.$on ? 'background: #fdeec4; border: 1px solid #e2b45a;' : '')}
`;
const TreeBox = styled.div`
  flex: 1;
  background: #fff;
  padding-top: 2px;
  overflow: hidden;
  border-left: 1px solid #dfe1e6;
`;
const TreeRow = styled.div<{ $l: number }>`
  height: 16px;
  display: flex;
  align-items: center;
  margin-left: ${p => -12 + 19 * p.$l}px;
  white-space: nowrap;
`;
const Exp = styled.span`
  width: 16px;
  flex: none;
  display: flex;
`;
const ExpBox = styled.span`
  width: 9px;
  height: 9px;
  display: flex;
  align-items: center;
  justify-content: center;
  border: 1px solid #808080;
  color: #000;
  letter-spacing: 0;
  font: 9px/7px "Liberation Mono", monospace;
`;
const Tick = styled.span`
  width: 8px;
  height: 12px;
  flex: none;
  display: flex;
  margin-top: -4px;
`;
const TreeLabel = styled.span<{ $b?: boolean; $sel?: boolean }>`
  margin-left: 2px;
  padding: 0 1px;
  height: 14px;
  line-height: 13px;
  font-weight: ${p => (p.$b ? 700 : 400)};
  letter-spacing: ${p => (p.$b ? 0 : -0.3)}px;
  color: ${p => (p.$sel ? '#fff' : '#111')};
  ${p => (p.$sel ? 'background: #0a246a; outline: 1px dotted #000;' : '')}
`;
const PropPanel = styled.div`
  height: 387px;
  flex: none;
  display: flex;
  flex-direction: column;
`;
const PropCombo = styled.div`
  height: 28px;
  flex: none;
  padding: 4px 2px;
  background: #dfe1e6;
`;
const PropComboBox = styled.div`
  height: 20px;
  display: flex;
  align-items: center;
  justify-content: space-between;
  padding-left: 3px;
  background: #fff;
`;
const PropComboBtn = styled.span`
  width: 13px;
  align-self: stretch;
  margin: 1px;
  display: flex;
  align-items: center;
  justify-content: center;
  background: #d4d0c8;
`;
const PropGrid = styled.div`
  flex: 1;
  min-height: 0;
  padding-top: 1px;
  background: #fff;
  border-top: 1px solid #808080;
  border-left: 1px solid #d4d0c8;
  border-right: 1px solid #d4d0c8;
`;
const PropRow = styled.div`
  height: 17px;
  display: grid;
  grid-template-columns: 14px 123px 1fr;
  overflow: hidden;
`;
const PropGut = styled.span`
  background: #dfdcd4;
`;
const PropCell = styled.span`
  padding-left: 3px;
  color: #8c8c8c;
  line-height: 15px;
  letter-spacing: -0.400px;
  white-space: nowrap;
  overflow: hidden;
  border-right: 1px solid #ecebe6;
  border-bottom: 1px solid #ecebe6;
`;
const Help = styled.div`
  height: 63px;
  flex: none;
  padding: 5px 5px;
  background: #dfe1e6;
  border: 1px solid #a0a0a0;
  border-top: 2px solid #8e8e8e;
  box-shadow: inset 0 1px 0 #fff;
  line-height: 15px;
  color: #111;
`;
const HelpTitle = styled.div`
  font-weight: 700;
  letter-spacing: 0;
  margin-bottom: 1px;
`;
const BTabs2 = styled(BottomTabs)`
  padding-left: 2px;
`;
const Status = styled.div`
  height: 19px;
  flex: none;
  display: flex;
  align-items: center;
  padding: 0 0 2px 2px;
  color: #d8deea;
  position: relative;
`;
const ResizeGrip = styled.svg`
  position: absolute;
  right: 1px;
  bottom: 1px;
  width: 14px;
  height: 14px;
`;

const TREE: [number, string | null, string, string, boolean, number?][] = [
  [0, null, 'solution', "Solution 'Virus' (2 projects)", true],
  [1, '-', 'vbproj', 'PostParser', true, 1],
  [2, '-', 'foldergrey', 'My Project', true],
  [3, '+', 'myapp', 'Application.myapp', true],
  [3, null, 'vb', 'AssemblyInfo.vb', true],
  [3, '+', 'resx', 'Resources.resx', true],
  [3, '+', 'settings', 'Settings.settings', true],
  [2, '+', 'refs', 'References', false],
  [2, '+', 'dotted', 'bin', false],
  [2, '+', 'dotted', 'obj', false],
  [2, '-', 'folder', 'Resources', false],
  [3, null, 'ico', 'Icon1.ico', true],
  [3, null, 'ico', 'Perspective Button Go.ico', true],
  [2, null, 'config', 'app.config', true],
  [2, '-', 'form', 'Form1.vb', true, 2],
  [3, null, 'des', 'Form1.Designer.vb', true],
  [3, null, 'des', 'Form1.resx', true],
  [2, null, 'vb', 'Module1.vb', true],
  [2, '-', 'form', 'Progress.vb', true],
  [3, null, 'des', 'Progress.Designer.vb', true],
  [3, null, 'des', 'Progress.resx', true],
  [2, null, 'adapter', 'TableAdapterBase.vb', true],
  [2, '-', 'xsd', 'TraceLog_DS.xsd', true],
  [3, null, 'des', 'TraceLog_DS.Designer.vb', true],
  [3, null, 'des', 'TraceLog_DS.vb', true],
  [3, null, 'des', 'TraceLog_DS.xsc', true],
  [3, null, 'des', 'TraceLog_DS.xss', true],
  [1, '-', 'setup', 'PostParserSetup', true],
  [2, '-', 'folder', 'Detected Dependencies', false],
  [3, null, 'dotnet', 'Microsoft .NET Framework', false],
  [3, null, 'dll', 'MySql.Data.dll', false],
  [2, null, 'output', 'Primary output from PostParser (Active)', false],
];

const MENUS: [ReactNode, number][] = [
  [<><u>F</u>ile</>, 30], [<><u>E</u>dit</>, 32], [<><u>V</u>iew</>, 36], [<><u>P</u>roject</>, 48], [<><u>B</u>uild</>, 36],
  [<><u>D</u>ebug</>, 45], [<>Tea<u>m</u></>, 40], [<>D<u>a</u>ta</>, 37], [<><u>T</u>ools</>, 39], [<>Te<u>s</u>t</>, 36],
  [<><u>W</u>indow</>, 51], [<><u>H</u>elp</>, 40],
];
const COLS = ['i', 'CrDate', 'RawUrl', 'UrlReferrer', 'HttpMethod', 'UserHostAddress', 'QueryString', 'Form', 'RequestPa'];
const PROPS: [string, string][] = [
  ['Build Action', 'Compile'],
  ['Copy to Output Directory', 'Do not copy'],
  ['Custom Tool', ''],
  ['Custom Tool Namespace', ''],
  ['File Name', 'Form1.vb'],
  ['Full Path', 'G:\\Projects\\All_Votpusk\\Virus\\'],
];
const BTABS: [string, string, number, boolean?][] = [
  ['watch', 'Watch 1', 70, true], ['winfind', 'Find Results 1', 97], ['winfind', 'Find Results 2', 97], ['symbol', 'Find Symbol Results', 125],
  ['callstack', 'Call Stack', 76], ['breakpt', 'Breakpoints', 86], ['pending', 'Pending Changes', 113], ['outputwin', 'Output', 64],
  ['errlist', 'Error List', 73], ['hierarchy', 'Call Hierarchy', 100],
];
const TRAY: [string, string][] = [
  ['worker', 'BackgroundWorker1'], ['ctxmenu', 'ContextMenuStrip1'], ['dataset', 'TraceLog_DS'],
  ['binding', 'TraceLogBindingSource'], ['tableadapter', 'TraceLogTableAdapter'],
];

const VBar = ({ thumb }: { thumb: number }) => (
  <VTrack>
    <SBtn $w={16} $h={16}><Tri $dir="up" /></SBtn>
    {thumb > 0 && <VThumb $h={thumb} />}
    <Spacer />
    <SBtn $w={16} $h={17}><Tri /></SBtn>
  </VTrack>
);
const GhostBar = () => (
  <VTrack>
    <SBtn $w={16} $h={16}><Tri $dir="up" $c="#808080" /></SBtn>
    <Spacer />
    <SBtn $w={16} $h={16}><Tri $c="#808080" /></SBtn>
  </VTrack>
);

export default function App() {
  return (
    <>
      <Global />
      <Frame>
        <TitleBar>
          <Icon n="vslogo" />
          <TitleText>Virus (Running) - Microsoft Visual Studio (Administrator)</TitleText>
          <Caps gap={2} />
        </TitleBar>
        <MenuBar>
          {MENUS.map(([m, w], i) => <MenuItem key={i} $w={w}>{m}</MenuItem>)}
        </MenuBar>
        <ToolRow>
          <Bar items={bar1} />
          <Bar items={bar2} />
        </ToolRow>
        <Main>
          <LeftCol>
            <DocTabs>
              <DocTab $w={87}>Module1.vb</DocTab>
              <DocTab $w={77}>Form1.vb</DocTab>
              <DocTab $w={123}>Form1.Designer.vb</DocTab>
              <DocTab $w={118} $on>Form1.vb [Design]<CloseX c="#6e7480" /></DocTab>
              <DocArrow><Tri $c="#c4ccda" /></DocArrow>
            </DocTabs>
            <Doc>
              <DesignerRow>
                <Canvas>
                  <Selection>
                    <Handle />
                    <FormWin>
                      <FormTitle>
                        <Icon n="greenball" />
                        <FormTitleText>Arenda Antivirus (парсер POST-запросов к сайту)</FormTitleText>
                        <Caps gap={4} />
                      </FormTitle>
                      <FormBody>
                        <DashCell $h={50} $top={8}>
                          <NotePanel>
                            <Note>Для анализа запросов к сайту сначала выберите запрос в базу, потом конкретный запрос в таблице ниже</Note>
                            <FormCombo><ComboBtn><Tri /></ComboBtn></FormCombo>
                            <GoBtn><Icon n="greenball" s={18} /></GoBtn>
                          </NotePanel>
                        </DashCell>
                        <DashCell $h={218} $top={1}>
                          <Group $h={213} $pt={3}>
                            <Legend $ls={-0.25}>POST-запросы к сайту</Legend>
                            <DataGrid>
                              <GridRow $h={17} $bg="#d4d0c8">
                                <GridCell $w={41} $head />
                                {COLS.map(c => <GridCell key={c} $w={100} $head>{c}</GridCell>)}
                              </GridRow>
                              <GridRow $h={22} $bg="#fff">
                                <GridCell $w={41} $head><RowMark /></GridCell>
                                {COLS.map(c => <GridCell key={c} $w={100} />)}
                              </GridRow>
                              <GridSpace />
                              <HScroll>
                                <SBtn><Tri $dir="left" /></SBtn>
                                <HThumb />
                                <Spacer />
                                <SBtn><Tri $dir="right" /></SBtn>
                              </HScroll>
                            </DataGrid>
                          </Group>
                        </DashCell>
                        <DashCell $h={218} $top={1}>
                          <Group $h={213} $pt={2}>
                            <Legend $ls={-0.7}>RequestForm</Legend>
                            <Sunken $h={192}><GhostBar /></Sunken>
                          </Group>
                        </DashCell>
                        <DashCell $h={218} $top={1}>
                          <Group $h={209} $pt={2}>
                            <Legend $ls={-0.6}>RequestParams</Legend>
                            <Sunken $h={187}><GhostBar /></Sunken>
                          </Group>
                        </DashCell>
                      </FormBody>
                    </FormWin>
                  </Selection>
                </Canvas>
                <VBar thumb={667} />
              </DesignerRow>
              <Tray>
                {TRAY.map(([n, t]) => <TrayItem key={t}><Icon n={n} />{t}</TrayItem>)}
              </Tray>
            </Doc>
            <Watch>
              <DockTitle>
                <DockName>Watch 1</DockName>
                <DockCtl c="#d8dee8" />
              </DockTitle>
              <WatchBody>
                <WatchTable>
                  <WatchRow $h={18} $head>
                    <WatchCell $w={9} />
                    <WatchCell $w={299}>Name</WatchCell>
                    <WatchCell $w={599}>Value</WatchCell>
                    <WatchCell>Type</WatchCell>
                  </WatchRow>
                  <WatchRow $h={18}>
                    <WatchCell $w={9} />
                    <WatchCell $w={299} />
                    <WatchCell $w={599} />
                    <WatchCell />
                  </WatchRow>
                </WatchTable>
                <VBar thumb={0} />
              </WatchBody>
            </Watch>
            <BottomTabs>
              {BTABS.map(([n, t, w, on]) => (
                <BTab key={t} $w={w} $on={on} $v={on ? 2 : 0}><Icon n={n} />{t}</BTab>
              ))}
            </BottomTabs>
          </LeftCol>
          <RightCol>
            <SolPanel>
              <SolTitle>
                <DockName>Solution Explorer</DockName>
                <DockCtl c="#6d6448" />
              </SolTitle>
              <PanelBar $h={26} $pl={4}>
                <PBtn><Icon n="showall" /></PBtn>
                <Sep $w={6} />
                <PBtn $w={22} $on><Icon n="showfiles" /></PBtn>
                <PBtn><Icon n="refresh" /></PBtn>
                <Sep $w={4} />
                <PBtn $w={22}><Icon n="code" /></PBtn>
                <PBtn $w={21}><Icon n="designer" /></PBtn>
                <PBtn $w={22}><Icon n="classdiag" /></PBtn>
              </PanelBar>
              <TreeBox>
                {TREE.map(([l, e, ic, t, ck, mark], i) => (
                  <TreeRow key={i} $l={l}>
                    <Exp>{e && <ExpBox>{e === '-' ? '−' : '+'}</ExpBox>}</Exp>
                    <Tick>
                      {ck && (
                        <svg width="8" height="12" viewBox="0 0 8 12">
                          <path d="M.5 6l2 3 5-8" fill="none" stroke="#3a62a8" strokeWidth="1.400" />
                        </svg>
                      )}
                    </Tick>
                    <Icon n={ic} />
                    <TreeLabel $b={mark === 1} $sel={mark === 2}>{t}</TreeLabel>
                  </TreeRow>
                ))}
              </TreeBox>
            </SolPanel>
            <PropPanel>
              <DockTitle>
                <DockName>Properties</DockName>
                <DockCtl c="#d8dee8" />
              </DockTitle>
              <PropCombo>
                <PropComboBox>
                  <span><b>Form1.vb</b> File Properties</span>
                  <PropComboBtn><Tri /></PropComboBtn>
                </PropComboBox>
              </PropCombo>
              <PanelBar $h={25} $pl={3}>
                <PBtn><Icon n="catgrid" /></PBtn>
                <PBtn $on><Icon n="az" /></PBtn>
                <Sep $w={4} />
                <PBtn><Icon n="pages" /></PBtn>
              </PanelBar>
              <PropGrid>
                {PROPS.map(([k, v]) => (
                  <PropRow key={k}>
                    <PropGut />
                    <PropCell>{k}</PropCell>
                    <PropCell>{v}</PropCell>
                  </PropRow>
                ))}
              </PropGrid>
              <Help>
                <HelpTitle>Build Action</HelpTitle>
                How the file relates to the build and deployment processes.
              </Help>
            </PropPanel>
            <BTabs2>
              <BTab $w={104}><Icon n="svn" />Subversion Info</BTab>
              <BTab $w={78} $on><Icon n="props" />Properties</BTab>
            </BTabs2>
          </RightCol>
        </Main>
        <Status>
          Ready
          <ResizeGrip viewBox="0 0 14 14">
            <path d="M13 2L2 13M13 6L6 13M13 10l-3 3" stroke="#c8ccd4" strokeWidth="1.200" />
          </ResizeGrip>
        </Status>
      </Frame>
    </>
  );
}
